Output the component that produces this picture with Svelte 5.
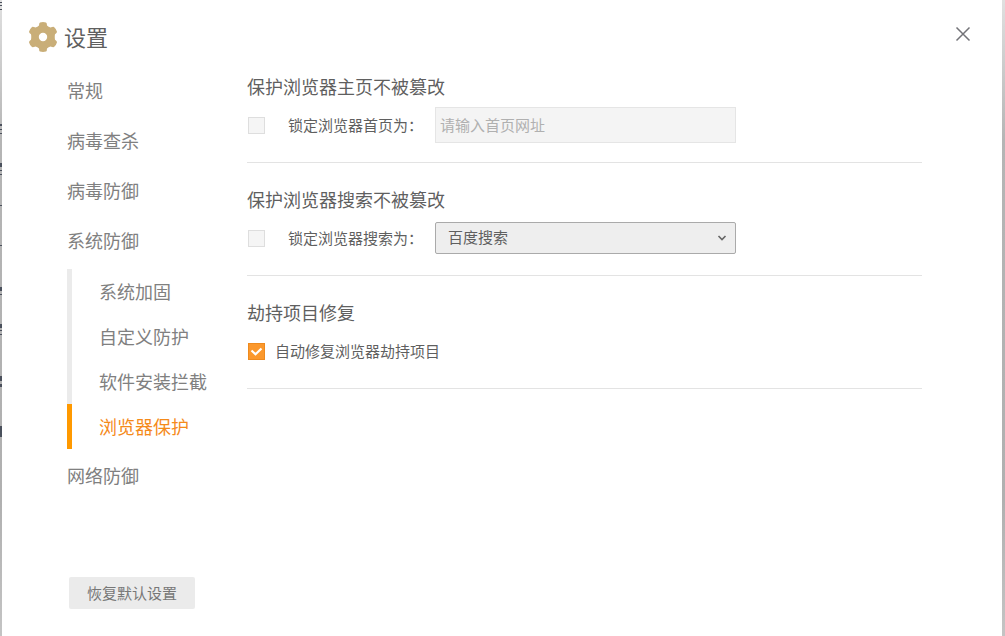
<script>
  const items = ['常规', '病毒查杀', '病毒防御', '系统防御', '网络防御'];
  const subItems = ['系统加固', '自定义防护', '软件安装拦截', '浏览器保护'];
  const expanded = '系统防御';
  let current = $state('浏览器保护');
  let lockHome = $state(false);
  let lockSearch = $state(false);
  let autoRepair = $state(true);
</script>

<div class="backdrop">
  <div class="dialog" role="dialog" aria-labelledby="title">
    <header>
      <svg class="gear" viewBox="0 0 30 30" aria-hidden="true">
        <path
          fill-rule="evenodd"
          d="M12 0.5 Q15 -0.3 18 0.5 Q19 1 19 3.5 Q20.5 4.8 22.5 5.5 Q25 4.4 26 4.9 Q28.4 7 29 9.7 Q29 11 27 12.3 Q26.5 15 27 17.7 Q29 19 29 20.3 Q28.4 23 26 25.1 Q25 25.6 22.5 24.5 Q20.5 25.2 19 26.5 Q19 29 18 29.5 Q15 30.3 12 29.5 Q11 29 11 26.5 Q9.5 25.2 7.5 24.5 Q5 25.6 4 25.1 Q1.6 23 1 20.3 Q1 19 3 17.7 Q3.5 15 3 12.3 Q1 11 1 9.7 Q1.6 7 4 4.9 Q5 4.4 7.5 5.5 Q9.5 4.8 11 3.5 Q11 1 12 0.5Z M15 10.8a4.2 4.2 0 1 0 0 8.4a4.2 4.2 0 1 0 0-8.4Z"
        />
      </svg>
      <h1 id="title">设置</h1>
      <button class="close" aria-label="关闭">
        <svg viewBox="0 0 16 16" aria-hidden="true"><path d="M1.5 1.5 14.5 14.5M14.5 1.5 1.5 14.5" /></svg>
      </button>
    </header>

    <div class="body">
      <aside>
        <nav>
          <ul>
            {#each items as item}
              <li>
                <a href="#{item}">{item}</a>
                {#if item === expanded}
                  <ul class="sub">
                    {#each subItems as sub}
                      <li>
                        <a href="#{sub}" class:active={sub === current} onclick={() => (current = sub)}>{sub}</a>
                      </li>
                    {/each}
                  </ul>
                {/if}
              </li>
            {/each}
          </ul>
        </nav>
        <button class="reset">恢复默认设置</button>
      </aside>

      <main>
        <section>
          <h2>保护浏览器主页不被篡改</h2>
          <div class="row">
            <input type="checkbox" id="lock-home" bind:checked={lockHome} />
            <label for="lock-home">锁定浏览器首页为：</label>
            <input class="field" type="text" aria-label="首页网址" placeholder="请输入首页网址" disabled={!lockHome} />
          </div>
        </section>
        <section>
          <h2>保护浏览器搜索不被篡改</h2>
          <div class="row">
            <input type="checkbox" id="lock-search" bind:checked={lockSearch} />
            <label for="lock-search">锁定浏览器搜索为：</label>
            <div class="select">
              <select aria-label="搜索引擎"><option>百度搜索</option></select>
              <svg viewBox="0 0 10 6" aria-hidden="true"><path d="M1.5 1 5 4.5 8.5 1" /></svg>
            </div>
          </div>
        </section>
        <section>
          <h2>劫持项目修复</h2>
          <div class="row compact">
            <input type="checkbox" id="repair" bind:checked={autoRepair} />
            <label for="repair">自动修复浏览器劫持项目</label>
          </div>
        </section>
      </main>
    </div>
  </div>
</div>

<style>
  :global(body) {
    margin: 0;
  }
  * {
    box-sizing: border-box;
  }
  .backdrop {
    --mark: linear-gradient(#4a505c, #4a505c);
    display: flex;
    min-height: 100vh;
    padding: 0 3px 0 2px;
    font-family: 'Noto Sans CJK SC', sans-serif;
    font-size: 15px;
    color: #5f5f5f;
    /* Slivers of the window behind show along the left edge. */
    background:
      var(--mark) 0 2px / 2px 1px,
      var(--mark) 0 5px / 2px 1px,
      var(--mark) 0 9px / 2px 1px,
      var(--mark) 0 124px / 2px 2px,
      var(--mark) 0 129px / 2px 1px,
      var(--mark) 0 133px / 2px 1px,
      var(--mark) 0 163px / 2px 4px,
      var(--mark) 0 170px / 2px 1px,
      var(--mark) 0 174px / 2px 1px,
      var(--mark) 0 205px / 2px 1px,
      var(--mark) 0 245px / 2px 1px,
      var(--mark) 0 287px / 2px 4px,
      var(--mark) 0 294px / 2px 1px,
      var(--mark) 0 324px / 2px 4px,
      var(--mark) 0 330px / 2px 1px,
      var(--mark) 0 334px / 2px 1px,
      var(--mark) 0 376px / 2px 5px,
      var(--mark) 0 384px / 2px 3px,
      var(--mark) 0 426px / 2px 11px,
      linear-gradient(#e0e0e0, #b5b5b5 140px, #b0b0b0 500px, #c4c4c4);
    background-repeat: no-repeat;
  }
  .dialog {
    display: flex;
    flex: 1;
    flex-direction: column;
    background: #fff;
  }
  header {
    display: flex;
    align-items: center;
    height: 65px;
    padding: 9px 29px 0 26px;
  }
  .gear {
    width: 30px;
    height: 30px;
    fill: #c9ae78;
  }
  h1 {
    flex: 1;
    margin: 0 0 0 6px;
    padding-bottom: 2px;
    font-size: 22px;
    line-height: 32px;
    font-weight: 400;
    color: #5f5f5f;
  }
  button {
    border: 0;
    font: inherit;
    cursor: pointer;
  }
  .close {
    display: flex;
    align-self: flex-start;
    margin-top: 15px;
    padding: 2px;
    background: none;
  }
  .close svg {
    width: 16px;
    height: 16px;
    fill: none;
    stroke: #737378;
    stroke-width: 1.5;
  }
  .body {
    display: flex;
    flex: 1;
    padding: 0 80px 0 65px;
  }
  aside {
    display: flex;
    flex-direction: column;
    width: 180px;
    padding-bottom: 27px;
  }
  nav {
    flex: 1;
  }
  ul {
    margin: 0;
    padding: 0;
    list-style: none;
  }
  a {
    display: block;
    font-size: 18px;
    line-height: 50px;
    color: #808080;
    text-decoration: none;
  }
  .sub {
    margin: 4px 0 1px;
  }
  .sub a {
    padding-left: 27px;
    border-left: 5px solid #ebebeb;
    line-height: 45px;
  }
  .sub a.active {
    border-color: #ff9900;
    color: #f58a1a;
  }
  .reset {
    align-self: flex-start;
    margin-left: 2px;
    padding: 0 18px;
    border-radius: 2px;
    line-height: 32px;
    color: #777;
    background: #ebebeb;
  }
  main {
    flex: 1;
    padding-top: 9px;
  }
  section {
    margin-bottom: 24px;
    padding-bottom: 19px;
    border-bottom: 1px solid #e3e3e3;
  }
  h2 {
    margin: 0 0 9px;
    font-size: 18px;
    line-height: 24px;
    font-weight: 400;
    color: #5f5f5f;
  }
  .row {
    display: flex;
    align-items: center;
    height: 36px;
  }
  input[type='checkbox'] {
    appearance: none;
    width: 17px;
    height: 17px;
    margin: 0 23px 0 1px;
    border: 1px solid #dedede;
    background: #f5f5f5;
  }
  .compact input[type='checkbox'] {
    margin-right: 10px;
  }
  input[type='checkbox']:checked {
    border-color: #ee8a1e;
    background: #fb982c
      url("data:image/svg+xml,%3Csvg xmlns='http://www.w3.org/2000/svg' viewBox='0 0 15 15'%3E%3Cpath d='M2.5 6.5 6.5 10.3 12.5 4.5' fill='none' stroke='white' stroke-width='2.2'/%3E%3C/svg%3E");
  }
  label {
    padding-bottom: 2px;
    white-space: nowrap;
  }
  .field,
  .select {
    width: 301px;
    margin-left: 12px;
  }
  .field {
    height: 36px;
    padding: 0 4px 2px;
    border: 1px solid #e5e5e5;
    font: inherit;
    background: #f4f4f4;
  }
  .field::placeholder {
    color: #b0b0b0;
  }
  .select {
    display: grid;
    align-items: center;
  }
  .select > * {
    grid-area: 1 / 1;
  }
  select {
    appearance: none;
    width: 100%;
    height: 32px;
    padding: 0 12px 4px;
    border: 1px solid #aaa;
    border-radius: 2px;
    font: inherit;
    color: #5f5f5f;
    background: #eee;
  }
  .select svg {
    justify-self: end;
    width: 10px;
    height: 6px;
    margin-right: 9px;
    fill: none;
    stroke: #666;
    stroke-width: 1.6;
    pointer-events: none;
  }
</style>
